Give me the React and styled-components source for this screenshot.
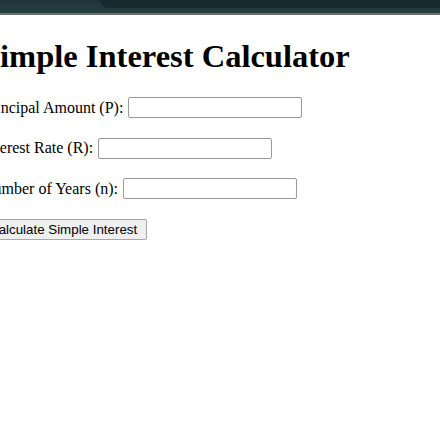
import React from "react";
import styled, { createGlobalStyle } from "styled-components";

const GlobalStyle = createGlobalStyle`
  body {
    margin: 0;
    background: #ffffff;
    font-family: "Liberation Serif", "Times New Roman", serif;
    color: #000000;
    overflow: hidden;
  }
`;

const App = () => {
  return (
    <>
      <GlobalStyle />
      <TopBar>
        <UrlEdge />
      </TopBar>
      <Page>
        <Title>Simple Interest Calculator</Title>
        <Form onSubmit={(e) => e.preventDefault()}>
          <Row>
            <Label htmlFor="principal">Principal Amount (P):</Label>
            <Input id="principal" type="text" />
          </Row>
          <Row>
            <Label htmlFor="rate">Interest Rate (R):</Label>
            <Input id="rate" type="text" />
          </Row>
          <Row>
            <Label htmlFor="years">Number of Years (n):</Label>
            <Input id="years" type="text" />
          </Row>
          <Row>
            <Button type="submit">Calculate Simple Interest</Button>
          </Row>
        </Form>
      </Page>
    </>
  );
};

const TopBar = styled.div`
  display: flex;
  height: 13px;
  background: linear-gradient(#1f3439, #26403f);
  border-bottom: 2px solid #66706f;
`;

const UrlEdge = styled.div`
  flex: 1;
  margin-left: 100px;
  height: 8px;
  background: #172a2f;
  border-bottom-left-radius: 10px;
`;

const Page = styled.div`
  margin-left: -18px;
`;

const Title = styled.h1`
  font-size: 32.5px;
  font-weight: 700;
  margin: 23px 0 22px;
  white-space: nowrap;
`;

const Form = styled.form`
  display: flex;
  flex-direction: column;
  gap: 19.5px;
`;

const Row = styled.div`
  display: flex;
  align-items: center;
  height: 21px;
  white-space: nowrap;
`;

const Label = styled.label`
  font-size: 16px;
  margin-right: 5px;
`;

const Input = styled.input`
  box-sizing: border-box;
  width: 174px;
  height: 21px;
  border: 1px solid #9a9a9a;
  border-radius: 2px;
  padding: 1px 2px;
  background: #ffffff;
`;

const Button = styled.button`
  box-sizing: border-box;
  height: 21px;
  padding: 1px 9px 1px 6px;
  font-family: "Liberation Sans", Arial, sans-serif;
  font-size: 13.33px;
  color: #000000;
  background: #efefef;
  border: 1px solid #a8a8a8;
  border-radius: 2px;
`;

export default App;
